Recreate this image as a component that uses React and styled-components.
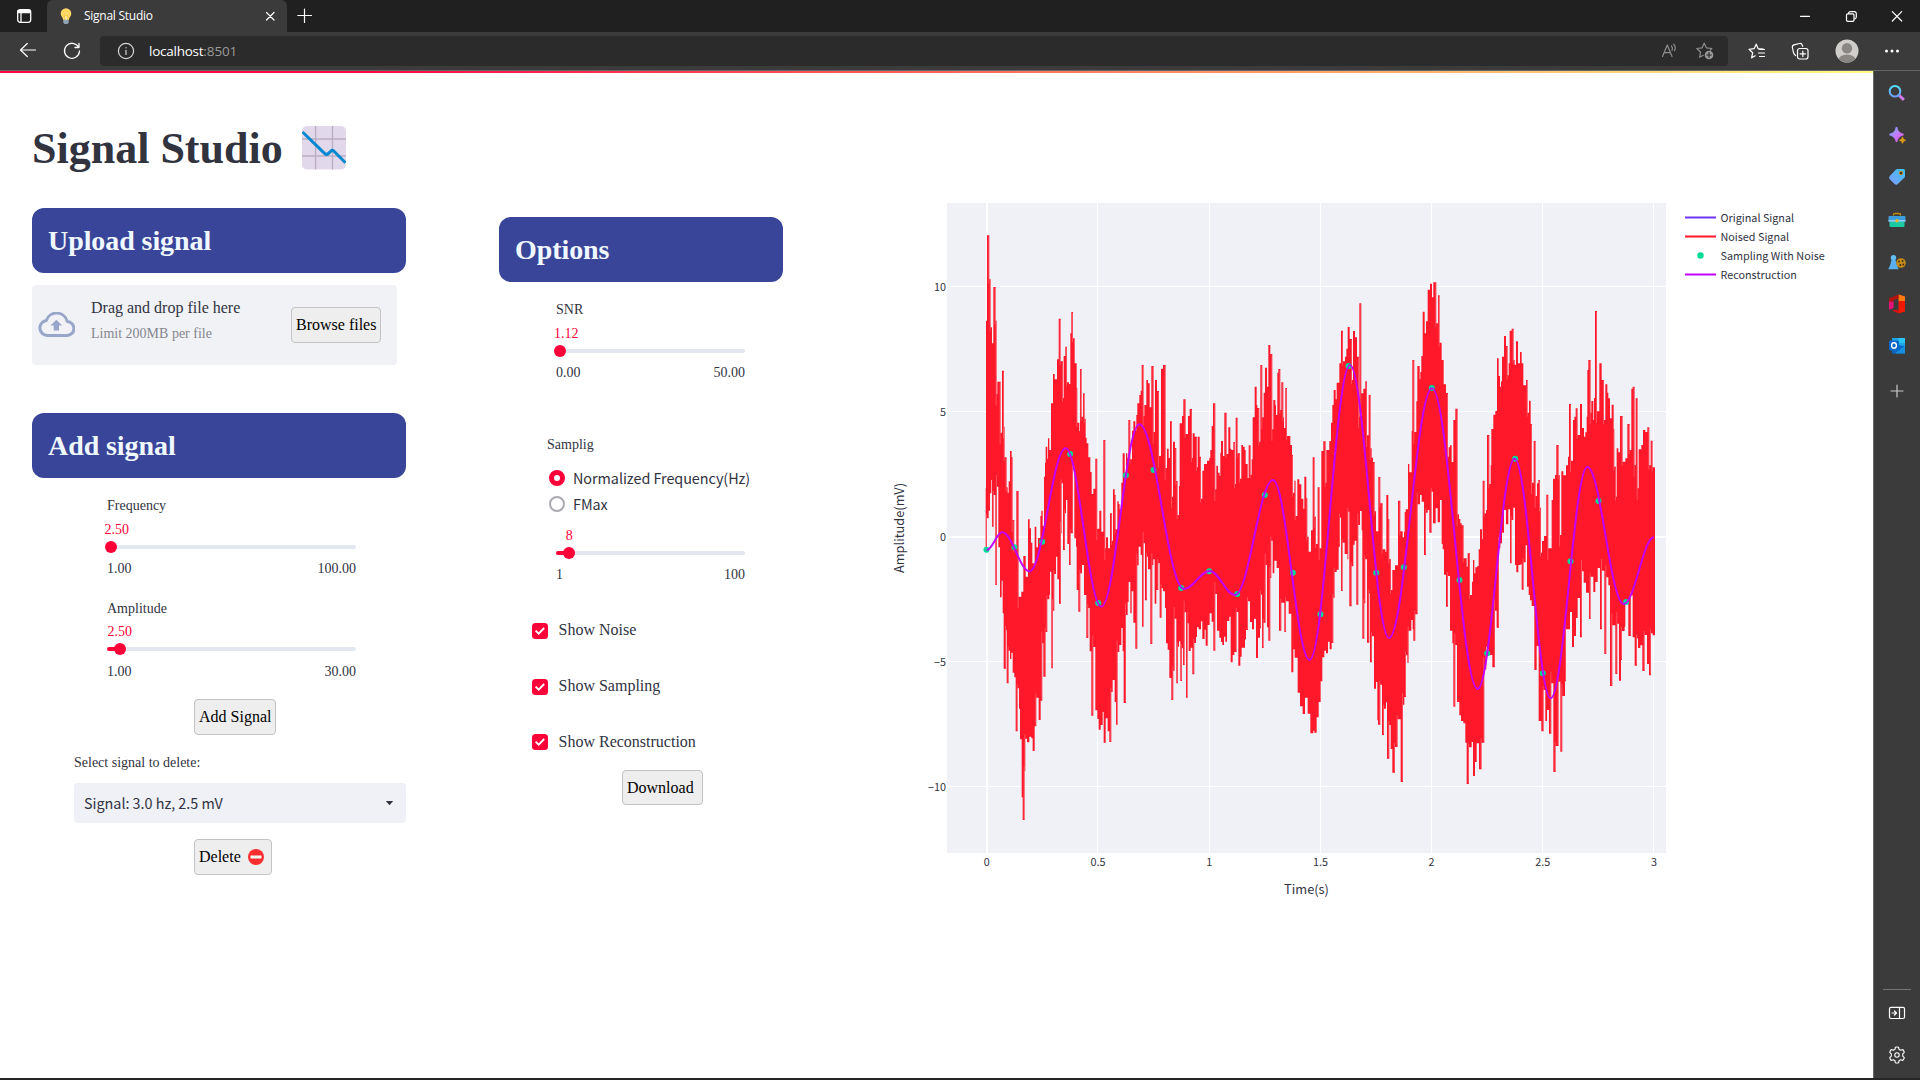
import React from "react";
import styled, { createGlobalStyle } from "styled-components";

const serif = `"Liberation Serif", "Times New Roman", serif`;
const sans = `"Noto Sans CJK SC", "Open Sans", sans-serif`;
const ui = `"Open Sans", "Noto Sans", sans-serif`;

const GlobalStyle = createGlobalStyle`
  * { box-sizing: border-box; }
  html, body { margin: 0; padding: 0; background: #222; overflow: hidden; }
  svg { display: block; flex: none; }
`;

/* ---------- browser frame ---------- */

const Window = styled.div`
  width: 1920px;
  height: 1080px;
  display: flex;
  flex-direction: column;
  background: #222;
  border-bottom: 2px solid #262626;
`;

const TabBar = styled.div`
  height: 32px;
  flex: none;
  display: flex;
  align-items: center;
  background: #202020;
`;

const TabActions = styled.div`
  width: 47px;
  display: flex;
  justify-content: center;
`;

const Tab = styled.div`
  width: 240px;
  height: 32px;
  display: flex;
  align-items: center;
  padding: 0 12px 0 13px;
  background: #3b3b3b;
  border-radius: 6px 6px 0 0;
`;

const TabTitle = styled.span`
  flex: 1;
  margin-left: 12px;
  color: #fff;
  font: 12px/16px ${ui};
  letter-spacing: -0.26px;
`;

const NewTab = styled.div`
  margin-left: 10px;
`;

const WindowButtons = styled.div`
  margin-left: auto;
  display: flex;
  gap: 28px;
  padding-right: 14px;
`;

const Toolbar = styled.div`
  height: 39px;
  flex: none;
  display: flex;
  align-items: center;
  padding: 0 20px 0 19px;
  background: #3b3b3b;
  border-bottom: 1px solid #666;
`;

const NavButtons = styled.div`
  width: 81px;
  display: flex;
  gap: 26px;
`;

const AddressBar = styled.div`
  width: 1628px;
  height: 30px;
  display: flex;
  align-items: center;
  padding: 0 14px 0 17px;
  background: #2b2b2b;
  border-radius: 4px;
`;

const Address = styled.span`
  flex: 1;
  margin-left: 14px;
  color: #fff;
  font: 13.5px/18px ${ui};
  letter-spacing: -0.25px;
  span { color: #9a9a9a; letter-spacing: -0.1px; }
`;

const AddressTools = styled.div`
  display: flex;
  gap: 18px;
`;

const ToolbarActions = styled.div`
  flex: 1;
  display: flex;
  align-items: center;
  justify-content: space-between;
  padding-left: 20px;
`;

const Body = styled.div`
  flex: 1;
  display: flex;
  min-height: 0;
`;

const Sidebar = styled.aside`
  width: 47px;
  display: flex;
  flex-direction: column;
  align-items: center;
  padding: 12px 0 14px;
  background: #3b3b3b;
  border-left: 1px solid #6a6a6a;
`;

const SidebarApps = styled.div`
  display: flex;
  flex-direction: column;
  gap: 22.2px;
`;

const SidebarFooter = styled.div`
  margin-top: auto;
  width: 28px;
  display: flex;
  flex-direction: column;
  align-items: center;
  gap: 24px;
  padding-top: 14px;
  border-top: 1px solid #767676;
`;

/* ---------- page ---------- */

const Page = styled.main`
  width: 1873px;
  background: #fff;
`;

const Decoration = styled.div`
  height: 2px;
  background: linear-gradient(90deg, #ff0844 20%, #fffd80);
`;

const Title = styled.h1`
  height: 53px;
  margin: 49px 0 0;
  padding-left: 32px;
  display: flex;
  gap: 19px;
  color: #31333f;
  font: bold 44px/53px ${serif};
`;

const Columns = styled.div`
  display: grid;
  grid-template-columns: 374px 284px 960px;
  padding-left: 32px;
`;

const Column = styled.section`
  display: flex;
  flex-direction: column;
  padding-top: ${(p) => p.$top}px;
  margin-left: ${(p) => p.$left || 0}px;
  width: ${(p) => p.$width}px;
`;

const Banner = styled.h2`
  height: 65px;
  margin: 0;
  padding-left: 16px;
  border-radius: 12px;
  background: #394598;
  color: #f0f8ff;
  font: bold 28px/65px ${serif};
  letter-spacing: -0.08px;
`;

const Dropzone = styled.div`
  width: 365px;
  height: 80px;
  margin: 12px 0 48px;
  display: flex;
  padding: 14px 16px 0 6px;
  border-radius: 4px;
  background: #f0f2f6;
`;

const DropText = styled.div`
  flex: 1;
  margin-left: 16px;
  color: #31333f;
  font: 16px/18px ${serif};
`;

const DropHint = styled.div`
  margin-top: 8px;
  color: #85868d;
  font-size: 14px;
`;

const CloudSlot = styled.div`
  padding-top: 13px;
`;

const Button = styled.button`
  width: ${(p) => p.$width}px;
  height: ${(p) => p.$height || 36}px;
  margin: ${(p) => p.$margin || "0"};
  padding: 0 4px;
  display: flex;
  align-items: center;
  gap: 7px;
  border: 1px solid #c3c3c5;
  border-radius: 4px;
  background: #eee;
  color: #000;
  font: 16px/34px ${serif};
  white-space: nowrap;
`;

const SliderBox = styled.div`
  width: ${(p) => p.$width}px;
  margin: ${(p) => p.$margin};
  color: #31333f;
  font: 14px/20px ${serif};
`;

const SliderLabel = styled.div`
  height: 20px;
  margin-bottom: ${(p) => p.$gap}px;
`;

const SliderValue = styled.div`
  width: max-content;
  min-width: 14px;
  height: 20px;
  text-align: center;
  color: #ff0038;
`;

const Track = styled.div`
  position: relative;
  height: 4px;
  margin: 5px 0 ${(p) => p.$gap}px;
  border-radius: 2px;
  background: #e3e7f0;
`;

const Fill = styled.div`
  height: 4px;
  border-radius: 2px;
  background: #ff0038;
`;

const Thumb = styled.div`
  position: absolute;
  top: -4px;
  width: 12px;
  height: 12px;
  border-radius: 50%;
  background: #ff0038;
`;

const Ticks = styled.div`
  height: 20px;
  display: flex;
  justify-content: space-between;
`;

const FieldLabel = styled.div`
  margin: ${(p) => p.$margin};
  color: #31333f;
  font: 14px/20px ${serif};
`;

const Select = styled.div`
  width: 332px;
  height: 40px;
  margin-left: 42px;
  display: flex;
  align-items: center;
  justify-content: space-between;
  padding: 0 13px 0 10px;
  border-radius: 4px;
  background: #eff1f7;
  color: #31333f;
  font: 14.4px/24px ${sans};
  letter-spacing: -0.03px;
`;

const RadioRow = styled.div`
  height: ${(p) => p.$height || 26}px;
  margin-left: 50px;
  display: flex;
  align-items: center;
  gap: 8px;
  color: #31333f;
  font: 14.4px/24px ${sans};
  letter-spacing: -0.05px;
`;

const RadioDot = styled.span`
  width: 16px;
  height: 16px;
  border-radius: 50%;
  border: ${(p) => (p.$on ? "5px solid #ff0038" : "2px solid #a9aab0")};
  background: #fff;
`;

const CheckRow = styled.div`
  height: 16px;
  margin: 0 0 ${(p) => p.$gap}px 33px;
  display: flex;
  align-items: center;
  gap: 10.5px;
  color: #31333f;
  font: 16px/16px ${serif};
`;

const CheckText = styled.span`
  margin-top: ${(p) => p.$shift}px;
`;

const ChartSlot = styled.section`
  padding-top: 15px;
  margin-left: 190px;
`;

const ChartSvg = styled.svg`
  text { fill: #31333f; font-family: ${sans}; font-size: 10.8px; }
  .axis { font-size: 12.8px; }
`;

function Slider({ width, margin, label, labelGap = 5, tickGap = 10, value, valueLeft, pos, min, max }) {
  return (
    <SliderBox $width={width} $margin={margin}>
      {label && <SliderLabel $gap={labelGap}>{label}</SliderLabel>}
      <SliderValue style={{ marginLeft: valueLeft }}>{value}</SliderValue>
      <Track $gap={tickGap}>
        <Fill style={{ width: pos }} />
        <Thumb style={{ left: pos - 6 }} />
      </Track>
      <Ticks><span>{min}</span><span>{max}</span></Ticks>
    </SliderBox>
  );
}

function Check({ label, gap, shift = -2 }) {
  return (
    <CheckRow $gap={gap}>
      <svg width="16" height="16" viewBox="0 0 16 16">
        <rect width="16" height="16" rx="3.5" fill="#ff0038" />
        <path d="M3.6 7.6 6.7 10.6 12.2 5" fill="none" stroke="#fff" strokeWidth="1.9" />
      </svg>
      <CheckText $shift={shift}>{label}</CheckText>
    </CheckRow>
  );
}

/* ---------- chart ---------- */

/* Upper and lower outline of the noisy trace: x, y pairs at a third of a pixel. */
const UPPER = `317,895 318,392 321,136 328,268 332,412 336,460 340,291 347,392 350,612 352,575 362,728 366,542 372,710 374,802 380,892 383,908 386,874 390,783 395,802 398,990 403,1075 409,903 416,1220 424,1205 430,1098 437,1160 444,988 449,1015 453,1058 457,1120 464,1010 469,1072 474,1044 481,978 484,962 488,1008 492,860 495,818 497,770 502,806 504,745 508,780 513,640 519,552 524,568 531,508 536,386 542,514 549,624 551,498 556,470 561,577 567,582 571,430 574,366 579,445 584,520 590,594 592,698 598,724 600,537 605,680 609,610 614,686 617,743 620,760 625,802 631,846 635,912 640,896 646,806 652,1016 658,962 664,1025 670,750 676,1075 678,1042 684,1075 690,970 696,1052 699,898 704,915 707,1018 712,934 716,942 719,958 724,878 728,790 734,848 738,790 742,805 745,690 751,808 756,722 760,694 766,722 769,675 772,640 778,615 782,602 785,525 791,678 793,645 799,570 804,580 809,652 814,528 821,726 825,570 831,603 837,798 843,536 849,525 857,834 861,776 866,804 870,694 876,920 879,755 885,774 889,873 893,975 897,888 899,700 906,678 910,628 917,732 924,678 929,657 936,804 938,730 944,740 951,832 953,740 959,800 963,926 967,842 972,822 981,812 988,803 991,780 995,708 999,640 1006,898 1009,827 1014,848 1019,858 1021,788 1023,753 1029,798 1033,668 1040,792 1045,712 1051,776 1054,780 1060,756 1065,882 1067,683 1073,790 1080,866 1084,765 1089,770 1094,780 1097,822 1103,864 1106,766 1112,854 1115,808 1118,682 1124,590 1130,645 1132,654 1138,755 1141,525 1147,682 1151,608 1155,533 1161,590 1165,465 1171,492 1177,718 1180,630 1186,646 1188,675 1192,548 1195,537 1201,660 1204,577 1210,682 1212,714 1216,594 1221,738 1231,765 1236,795 1239,908 1243,872 1247,978 1252,868 1258,883 1264,926 1270,956 1273,860 1279,925 1282,1040 1286,1085 1293,1021 1298,802 1304,980 1308,1062 1313,892 1319,1075 1324,783 1330,754 1337,878 1339,780 1348,753 1353,698 1357,645 1361,600 1367,628 1370,578 1378,520 1383,422 1389,514 1395,500 1399,476 1403,411 1409,447 1416,570 1419,423 1425,442 1431,500 1437,680 1438,340 1444,610 1450,596 1456,574 1461,736 1466,615 1472,775 1475,803 1479,816 1484,964 1488,1024 1495,861 1501,940 1508,1078 1516,1085 1519,915 1525,988 1528,1108 1533,1200 1537,1140 1545,1126 1554,932 1561,1024 1568,1042 1572,1025 1574,966 1577,958 1584,822 1588,847 1595,722 1597,510 1603,726 1609,634 1612,528 1619,568 1621,546 1624,498 1628,365 1634,430 1638,394 1643,299 1650,281 1656,322 1660,277 1669,400 1674,316 1679,458 1685,510 1691,583 1698,609 1704,800 1706,772 1710,766 1715,816 1720,690 1726,656 1733,973 1737,987 1741,1000 1745,1006 1751,1105 1760,1130 1763,1090 1770,1215 1776,1175 1779,1110 1783,1150 1786,1132 1792,1128 1796,1078 1800,1018 1806,1048 1808,872 1814,970 1818,960 1821,735 1828,882 1832,826 1834,717 1840,674 1846,663 1851,505 1856,558 1860,590 1863,574 1866,500 1872,438 1878,468 1883,556 1886,520 1889,422 1895,416 1901,510 1904,524 1908,454 1914,520 1920,486 1925,520 1930,586 1938,570 1943,668 1947,632 1952,702 1956,878 1961,753 1967,918 1971,880 1975,870 1980,953 1983,1088 1986,1053 1992,1038 1999,914 2005,1075 2015,930 2019,866 2025,855 2029,765 2036,856 2040,1035 2044,844 2050,856 2058,826 2064,800 2067,642 2073,812 2079,690 2083,680 2087,655 2093,735 2100,642 2106,714 2112,740 2116,727 2120,680 2122,540 2125,510 2132,668 2134,633 2140,690 2142,624 2145,363 2151,664 2158,520 2165,570 2172,690 2176,583 2182,608 2185,625 2190,685 2195,644 2201,718 2203,830 2208,920 2210,775 2215,787 2220,678 2228,815 2236,805 2242,702 2249,780 2254,596 2258,590 2264,825 2267,625 2273,895 2276,778 2284,765 2289,720 2296,726 2302,712 2308,826 2312,752 2318,832 2325,832`;

const LOWER = `317,1075 321,985 326,962 330,910 334,870 336,1010 341,915 346,1185 351,890 355,1072 360,1222 365,1172 368,1270 371,1436 378,1320 380,1480 386,1382 390,1407 394,1388 398,1448 403,1462 407,1624 413,1495 417,1556 420,1648 425,1822 428,1890 434,1742 436,1646 441,1657 448,1640 454,1645 458,1683 464,1609 469,1523 476,1590 482,1532 487,1360 490,1460 497,1326 502,1228 508,1214 510,1145 514,1435 519,1262 523,1152 528,1100 532,1168 537,1241 543,1030 545,880 549,1080 555,970 558,930 562,1062 567,1125 572,1030 579,840 583,1045 588,1070 590,1200 595,1265 601,1150 606,1125 612,1215 619,1344 625,1254 629,1384 634,1577 640,1371 646,1561 652,1587 656,1619 662,1605 668,1566 671,1658 677,1585 683,1624 688,1656 694,1506 698,1470 704,1536 708,1604 713,1386 718,1365 724,1314 728,1384 731,1539 738,1275 743,1236 746,1176 751,1270 755,1204 760,1298 766,1376 772,1126 776,1070 782,1095 786,1310 791,1060 795,1231 801,1100 804,1138 811,1362 817,1125 820,1108 824,1241 829,1200 835,1120 839,1283 845,1195 849,1204 855,1254 858,1360 863,1379 868,1464 874,1530 880,1442 884,1286 889,1480 894,1370 897,1354 901,1473 906,1375 909,1425 914,1267 918,1523 923,1300 926,1383 932,1373 937,1453 943,1359 948,1341 951,1312 956,1318 963,1294 967,1347 974,1319 977,1367 983,1305 989,1270 995,1295 1000,1382 1006,1212 1011,1322 1018,1343 1023,1356 1027,1365 1032,1340 1036,1355 1041,1293 1048,1280 1052,1417 1058,1395 1063,1386 1070,1266 1075,1427 1081,1400 1085,1373 1095,1348 1098,1320 1104,1234 1110,1296 1116,1318 1122,1286 1128,1404 1134,1343 1140,1315 1143,1214 1146,1374 1151,1298 1157,1125 1161,1312 1165,1352 1171,1164 1174,1052 1178,1150 1183,1112 1190,1134 1197,1322 1204,1238 1213,1326 1218,1234 1226,1271 1234,1447 1240,1378 1244,1403 1253,1508 1260,1549 1268,1572 1275,1523 1283,1571 1291,1630 1300,1622 1303,1628 1310,1582 1316,1536 1322,1474 1327,1402 1333,1382 1338,1390 1344,1355 1349,1378 1355,1359 1360,1223 1364,1146 1370,1139 1376,1070 1380,983 1383,1203 1388,1058 1394,1092 1402,1108 1405,965 1408,1249 1415,1129 1420,1064 1424,1052 1429,1244 1435,1005 1440,963 1445,1021 1447,1346 1453,1240 1456,1108 1461,1358 1468,1210 1470,1417 1476,1339 1482,1496 1488,1476 1492,1591 1494,1604 1501,1484 1506,1635 1512,1556 1518,1537 1521,1706 1528,1605 1532,1677 1537,1748 1545,1671 1553,1588 1562,1776 1569,1544 1573,1521 1578,1396 1582,1418 1586,1322 1594,1290 1598,1318 1600,1352 1606,1273 1613,943 1620,915 1625,935 1632,1095 1638,968 1643,960 1648,1028 1655,905 1659,1000 1667,955 1673,997 1680,930 1685,1062 1688,1078 1692,1154 1698,1250 1704,1158 1710,1322 1717,1360 1720,1550 1726,1365 1731,1536 1738,1576 1743,1593 1750,1600 1756,1658 1760,1782 1767,1672 1775,1656 1779,1758 1785,1716 1790,1660 1797,1738 1805,1658 1813,1438 1819,1370 1825,1396 1831,1395 1837,1432 1845,1262 1850,1313 1857,1075 1861,1060 1866,1028 1872,960 1878,1003 1885,958 1890,1120 1895,990 1900,953 1905,1125 1909,1147 1915,1125 1922,1123 1925,1199 1931,1117 1937,1066 1941,1190 1946,1215 1950,1231 1955,1248 1963,1440 1970,1368 1976,1593 1984,1624 1991,1500 1996,1593 2001,1560 2007,1631 2014,1480 2020,1746 2027,1668 2036,1475 2041,1685 2047,1518 2055,1474 2058,1318 2070,1266 2076,1371 2082,1338 2088,1284 2093,1224 2100,1342 2106,1144 2111,1178 2118,1208 2127,1287 2132,1160 2140,1206 2146,1176 2153,1134 2160,1318 2166,1142 2173,1392 2179,1162 2185,1186 2190,1488 2197,1306 2206,1452 2212,1301 2217,1472 2223,1410 2226,1323 2234,1310 2236,1236 2245,1338 2253,1216 2258,1342 2264,1427 2271,1345 2274,1374 2281,1366 2287,1443 2294,1335 2301,1422 2307,1456 2313,1330 2318,1336 2325,1336`;

const parse = (s) => s.split(" ").map((p) => p.split(",").map(Number));
const upper = parse(UPPER);
const lower = parse(LOWER);

const steps = (pts) => {
  const out = [];
  pts.forEach(([x, y], i) => {
    if (i) out.push([x, pts[i - 1][1]]);
    out.push([x, y]);
  });
  return out;
};

const noisePath = "M" + [...steps(upper), ...steps(lower).reverse()].map((p) => p.join(" ")).join("L") + "Z";

/* Pale seams where neighbouring samples of the trace leave a hairline. */
const seams = (pts, dir) =>
  pts
    .map(([x, y], i) => {
      const next = pts[i + 1];
      if (!next) return "";
      const drop = (next[1] - y) * dir;
      return drop > 75 ? `M${next[0] - 1.5} ${y + 3 * dir}V${next[1] + dir * (drop > 150 ? 35 : 12)}` : "";
    })
    .join("");
const seamPath = seams(upper, 1) + seams(lower, -1);

const EXTREMA = [[320, 1080], [367, 1027], [449, 1144], [557, 775], [664, 1250], [778, 703], [912, 1197], [989, 1143], [1065, 1215], [1179, 870], [1289, 1410], [1410, 525], [1527, 1344], [1656, 595], [1793, 1497], [1904, 806], [2012, 1525], [2122, 831], [2231, 1242], [2322, 1042]];
const wavePath = EXTREMA.map(([x, y], i) => {
  if (!i) return `M${x} ${y}`;
  const [px, py] = EXTREMA[i - 1];
  const d = (x - px) * 0.3642;
  return `C${px + d} ${py} ${x - d} ${y} ${x} ${y}`;
}).join("");

const SAMPLES = [[319, 1079], [403, 1072], [486, 1055], [570, 792], [654, 1239], [737, 856], [820, 840], [903, 1194], [987, 1144], [1071, 1212], [1154, 915], [1238, 1148], [1321, 1273], [1405, 528], [1488, 1148], [1571, 1132], [1655, 594], [1738, 1170], [1821, 1390], [1905, 806], [1988, 1450], [2071, 1114], [2155, 933], [2238, 1236]];

const X_TICKS = [[106.8, "0"], [218, "0.5"], [329.3, "1"], [440.5, "1.5"], [551.5, "2"], [662.7, "2.5"], [774, "3"]];
const X_GRID = [217.5, 329.5, 440.5, 551.5, 662.5, 773.5];
const Y_TICKS = [[96.5, "10"], [221.5, "5"], [346.5, "0"], [471.5, "−5"], [596.5, "−10"]];
const LEGEND = [["Original Signal", "#6f35f0"], ["Noised Signal", "#ff172a"], ["Sampling With Noise", null], ["Reconstruction", "#c400fa"]];

function Chart() {
  return (
    <ChartSvg width="960" height="720" viewBox="0 0 960 720">
      <rect x="67" y="13" width="719" height="650" fill="#eff1f7" />
      {X_GRID.map((x) => <rect key={x} x={x - 0.5} y="13" width="1" height="650" fill="#fff" />)}
      {Y_TICKS.map(([y, t]) => <rect key={t} x="67" y={t === "0" ? y - 0.5 : y - 0.5} width="719" height={t === "0" ? 2 : 1} fill="#fff" />)}
      <rect x="106" y="13" width="2" height="650" fill="#fff" />
      <g transform="scale(0.33333)">
        <path d={noisePath} fill="#ff172a" />
        <path d={seamPath} fill="none" stroke="#fff" strokeOpacity="0.32" strokeWidth="2.2" />
        {SAMPLES.map(([x, y]) => <circle key={x} cx={x + 0.5} cy={y} r="9" fill="#00dc98" />)}
        <path d={wavePath} fill="none" stroke="#c400fa" strokeWidth="6" />
      </g>
      {X_TICKS.map(([x, t]) => <text key={t} x={x} y="675.6" textAnchor="middle">{t}</text>)}
      {Y_TICKS.map(([y, t]) => <text key={t} x="66" y={y + 4.3} textAnchor="end">{t}</text>)}
      <text className="axis" x="426.5" y="704" textAnchor="middle">Time(s)</text>
      <text className="axis" transform="translate(23.5 338) rotate(-90)" textAnchor="middle">Amplitude(mV)</text>
      {LEGEND.map(([t, c], i) => (
        <g key={t}>
          {c ? <rect x="805" y={26.5 + i * 19} width="31" height="2" fill={c} /> : <circle cx="820.5" cy={27.5 + i * 19} r="3.2" fill="#00dc98" />}
          <text x="840.5" y={32 + i * 19}>{t}</text>
        </g>
      ))}
    </ChartSvg>
  );
}

/* ---------- icons ---------- */

const Line = ({ w = 16, h = w, vb = `0 0 ${w} ${h}`, c = "#fff", sw = 1.2, children }) => (
  <svg width={w} height={h} viewBox={vb} fill="none" stroke={c} strokeWidth={sw} strokeLinecap="round" strokeLinejoin="round">{children}</svg>
);

const STAR = "M8.2 1.2 10.2 5.7 15.2 6.2M8.2 1.2 6.1 5.7 1 6.3 4.7 9.7 3.6 14.8 7.2 12.8";

const Bulb = () => (
  <svg width="12" height="17" viewBox="0 0 12 17">
    <path d="M6 .3A5.3 5.3 0 0 0 .7 5.6C.7 8.6 3 9.3 3.2 12h5.6C9 9.3 11.3 8.6 11.3 5.6A5.3 5.3 0 0 0 6 .3z" fill="#fdd663" />
    <path d="M5 12 4.2 7.5l1.3.8.7-.8.7.8 1-.8L7 12" fill="#fff0a8" stroke="#f2b632" strokeWidth=".6" />
    <path d="M3.3 11.7h5.4v2.5L7.6 16H4.4l-1.1-1.8z" fill="#8fa5b5" />
  </svg>
);

const EmojiSvg = styled.svg`
  margin-top: 4px;
`;

const ChartEmoji = () => (
  <EmojiSvg width="44" height="44" viewBox="0 0 44 44">
    <rect width="44" height="43.5" rx="5" fill="#e1d8ec" />
    <path d="M13.6 0v43.5M30.5 0v43.5M0 13h44M0 30h44" stroke="#b9adc1" strokeWidth="1.3" />
    <path d="M.5 6 22.5 27.4Q24.5 29.4 26.5 27.4L29 25Q30.5 23.7 32 25.2L43.5 36.8" fill="none" stroke="#0288d1" strokeWidth="3" />
  </EmojiSvg>
);

const Cloud = () => (
  <svg width="37" height="25" viewBox="0 0 37 25">
    <path d="M9.3 23.5a7.6 7.6 0 0 1-1-15.1A10.9 10.9 0 0 1 29.2 9.5 7 7 0 0 1 28.6 23.5z" fill="none" stroke="#98a6c9" strokeWidth="3" strokeLinejoin="round" />
    <path d="M18.3 7.8 24.2 13.6H21V18.6H15.7V13.6H12.5z" fill="#98a6c9" />
  </svg>
);

const sidebarIcons = [
  <svg key="search" width="20" height="20" viewBox="0 0 20 20">
    <defs><linearGradient id="s1" x1="0" y1="0" x2="0" y2="1"><stop stopColor="#50e2fa" /><stop offset="1" stopColor="#6f9cff" /></linearGradient></defs>
    <path d="m12.3 12.5 4.6 4.4" stroke="#d279ea" strokeWidth="3" />
    <circle cx="8" cy="8.3" r="5.3" fill="none" stroke="url(#s1)" strokeWidth="2" />
  </svg>,
  <svg key="discover" width="20" height="20" viewBox="0 0 20 20">
    <defs><linearGradient id="s2" x1="0" y1="0" x2="1" y2="1"><stop stopColor="#50b8f5" /><stop offset=".5" stopColor="#c57bff" /><stop offset="1" stopColor="#e34fd8" /></linearGradient></defs>
    <path d="M9.5 2Q10.5 8.2 16.5 9.5 10.5 10.8 9.500 17 8.500 10.800 2.500 9.500 8.500 8.200 9.500 2z" fill="url(#s2)" stroke="url(#s2)" strokeWidth="1.5" />
    <path d="M15.5 11.8Q16 14.500 18.800 15.200 16 15.900 15.500 18.600 15 15.900 12.200 15.200 15 14.500 15.500 11.800z" fill="#d99a16" stroke="#d99a16" strokeWidth=".5" />
  </svg>,
  <svg key="shopping" width="20" height="20" viewBox="0 0 20 20">
    <defs><linearGradient id="s3" x1="1" y1="0" x2="0" y2="1"><stop stopColor="#35c5ef" /><stop offset="1" stopColor="#849aff" /></linearGradient></defs>
    <path d="M9 2.5Q9.6 2 10.5 2H16.5Q18 2 18 3.5V9Q18 10 17.3 10.7L10.5 17.300Q9 18.500 7.500 17L2.500 12Q1.500 10.500 2.800 9z" fill="url(#s3)" />
    <circle cx="14" cy="6" r="1.7" fill="#3b3525" stroke="#c78316" strokeWidth="1" />
  </svg>,
  <svg key="tools" width="20" height="20" viewBox="0 0 20 20">
    <path d="M6.5 5.500V5q0-1.500 1.500-1.500h4q1.500 0 1.500 1.500v.5" fill="none" stroke="#c18812" strokeWidth="1.500" />
    <rect x="2.500" y="9.500" width="15" height="7.500" rx="1" fill="#19cba5" />
    <path d="M1.500 11.500V7q0-1 1-1h15q1 0 1 1v4.500z" fill="#3c9edc" /><path d="M1.500 10.200h17v1.300h-17z" fill="#b0d3fa" />
    <circle cx="10" cy="10.700" r="1.700" fill="#f0b429" />
  </svg>,
  <svg key="games" width="20" height="20" viewBox="0 0 20 20">
    <circle cx="6.500" cy="5.800" r="2.700" fill="#63bdf5" /><path d="M4.500 7.800h4L10 13.300l1.700 4H1.200l1.900-4z" fill="#59aff0" />
    <circle cx="14" cy="11" r="4.800" fill="#c48a1b" /><g fill="#3d2d12"><circle cx="12" cy="9.500" r=".9" /><circle cx="15.600" cy="9" r=".9" /><circle cx="13.300" cy="13" r=".9" /><circle cx="16.300" cy="12.500" r=".9" /></g>
  </svg>,
  <svg key="office" width="20" height="20" viewBox="0 0 20 20">
    <path d="M11.500.5 18 2.500V17.500L11.500 19.500z" fill="#f01800" /><path d="M11.500.5 18 2.500V7h-6.500z" fill="#f87b12" />
    <path d="M11.500.5V4.500L6.500 6v8L2 15.800V4.200z" fill="#b51414" /><path d="M2 8 6.500 7.500V14L2 15.800z" fill="#e3137c" /><path d="M5 16.500 11.500 15.500V19.500z" fill="#d81212" />
  </svg>,
  <svg key="outlook" width="20" height="20" viewBox="0 0 20 20">
    <path d="M5 2.500q0-.5.5-.5H17.500q.5 0 .5.500V10H5z" fill="#1ea6e8" /><path d="M11.500 2H18v5h-6.500z" fill="#28c4f4" /><path d="M5 9 18 10V17.500H5z" fill="#0a67c0" /><path d="M18 9.500V17.500H8z" fill="#168fe0" />
    <rect x="2" y="4.500" width="10" height="10" rx="1" fill="#0768ca" /><ellipse cx="7" cy="9.500" rx="2.400" ry="2.700" fill="none" stroke="#fff" strokeWidth="1.400" />
  </svg>,
];

function BrowserTop() {
  return (
    <>
      <TabBar>
        <TabActions>
          <Line w={16} sw={1.3}><rect x="1.7" y="1.7" width="13" height="12.6" rx="2.5" /><path d="M2 2.500h12.400v2.200H2z" fill="#fff" /><path d="M5 5v9" /></Line>
        </TabActions>
        <Tab>
          <Bulb />
          <TabTitle>Signal Studio</TabTitle>
          <Line w={10} sw={1.2}><path d="m1.500 1.500 7.500 7.500M9 1.500 1.500 9" /></Line>
        </Tab>
        <NewTab><Line w={16} sw={1.2}><path d="M7.500 1v13.500M.8 7.500h13.700" /></Line></NewTab>
        <WindowButtons>
          <Line w={18}><path d="M4.500 9.300h9" /></Line>
          <Line w={18}><rect x="4.500" y="6.800" width="7.500" height="7.500" rx="1.300" /><path d="M6.500 6.300V6Q7 4.600 8.500 4.600H12.500Q14.300 4.800 14.300 6.600V10Q14.200 11.500 12.800 12" /></Line>
          <Line w={18}><path d="m4.300 4.600 9.400 9.400M13.700 4.600l-9.400 9.400" /></Line>
        </WindowButtons>
      </TabBar>
      <Toolbar>
        <NavButtons>
          <Line w={18} h={16}><path d="M16.500 8H1.500M8.300 1.500 1.500 8l6.800 6.500" /></Line>
          <Line w={18} h={18} sw={1.3}><path d="M15.500 5A7.500 7.500 0 1 0 16.500 9M16 1.500V5.500H12" /></Line>
        </NavButtons>
        <AddressBar>
          <Line w={18} sw={1.2} c="#d5d5d5"><circle cx="9" cy="9" r="7.600" /><path d="M9 8.300v4.200M9 5.600v.2" /></Line>
          <Address>localhost<span>:8501</span></Address>
          <AddressTools>
            <Line w={18} c="#8d8d8d"><path d="M2.500 14.500 7.300 3l4.700 11.500M4.200 10.700h6.200M11.500 4q1.700 2 .5 4.300M13.700 2.200q2.700 3.300.7 6.600" /></Line>
            <Line w={18} c="#8d8d8d"><path d="M8.200 1.200 10.500 5.900 15.800 6.500M8.200 1.200 6 5.900.8 6.500 4.600 10.200 3.600 15.300 7.300 13.300M15.800 6.500 14.300 8" /><circle cx="13" cy="13" r="4.300" fill="#9a9a9a" stroke="none" /><path d="M13 10.700v4.600M10.700 13h4.600" stroke="#2b2b2b" /></Line>
          </AddressTools>
        </AddressBar>
        <ToolbarActions>
          <Line w={18} h={16}><path d={STAR + "M11 6.500h5.500M10.500 10h6M11.500 13.500h5"} /></Line>
          <Line w={18} h={18}><rect x="6.500" y="6.500" width="10.500" height="10.500" rx="2.200" /><path d="M11.800 9v5.500M9 11.800h5.500M4.500 13.500Q2.800 12 2.300 10L1.400 5.500Q1 3.500 3 2.900L8.500 1.500Q10.500 1 11.200 3L11.700 4.300" /></Line>
          <svg width="24" height="24" viewBox="0 0 24 24">
            <defs><clipPath id="face"><circle cx="12" cy="12" r="11.500" /></clipPath></defs>
            <g clipPath="url(#face)"><rect width="24" height="24" fill="#d0ceca" /><circle cx="12" cy="9.300" r="5.200" fill="#8a8683" /><ellipse cx="12" cy="21" rx="8.500" ry="5.500" fill="#8a8683" /></g>
          </svg>
          <svg width="16" height="4" viewBox="0 0 16 4" fill="#fff"><circle cx="2.500" cy="2" r="1.500" /><circle cx="8" cy="2" r="1.500" /><circle cx="13.500" cy="2" r="1.500" /></svg>
        </ToolbarActions>
      </Toolbar>
    </>
  );
}

export default function App() {
  return (
    <Window>
      <GlobalStyle />
      <BrowserTop />
      <Body>
        <Page>
          <Decoration />
          <Title>Signal Studio <ChartEmoji /></Title>
          <Columns>
            <Column $top={33} $width={374}>
              <Banner>Upload signal</Banner>
              <Dropzone>
                <CloudSlot><Cloud /></CloudSlot>
                <DropText>Drag and drop file here<DropHint>Limit 200MB per file</DropHint></DropText>
                <Button $width={90} $margin="8px 0 0">Browse files</Button>
              </Dropzone>
              <Banner>Add signal</Banner>
              <Slider width={249} margin="18px 0 0 75px" label="Frequency" labelGap={4} value="2.50" valueLeft={-2.5} pos={3.7} min="1.00" max="100.00" />
              <Slider width={249} margin="20px 0 0 75px" label="Amplitude" labelGap={3} tickGap={11} value="2.50" valueLeft={0.5} pos={13} min="1.00" max="30.00" />
              <Button $width={82} $margin="17px 0 0 162px">Add Signal</Button>
              <FieldLabel $margin="18px 0 10px 42px">Select signal to delete:</FieldLabel>
              <Select>
                Signal: 3.0 hz, 2.5 mV
                <svg width="7" height="4" viewBox="0 0 7 4"><path d="M.2.5Q0 0 .6 0H6.4Q7 0 6.8.5L3.9 3.7Q3.5 4.1 3.1 3.7z" fill="#31333f" /></svg>
              </Select>
              <Button $width={78} $margin="16px 0 0 162px">
                Delete
                <svg width="16" height="16" viewBox="0 0 16 16"><circle cx="8" cy="8" r="8" fill="#fb2f2f" /><rect x="2.5" y="6.6" width="11" height="2.8" rx=".5" fill="#fff" /></svg>
              </Button>
            </Column>
            <Column $top={42} $left={93} $width={284}>
              <Banner>Options</Banner>
              <Slider width={189} margin="18px 0 0 57px" label="SNR" labelGap={4} tickGap={10} value="1.12" valueLeft={-2} pos={4} min="0.00" max="50.00" />
              <FieldLabel $margin="52px 0 10px 48px">Samplig</FieldLabel>
              <RadioRow><RadioDot $on />Normalized Frequency(Hz)</RadioRow>
              <RadioRow $height={25}><RadioDot />FMax</RadioRow>
              <Slider width={189} margin="10px 0 38px 57px" tickGap={10} value="8" valueLeft={6.3} pos={13.3} min="1" max="100" />
              <Check label="Show Noise" gap={40} />
              <Check label="Show Sampling" gap={39} />
              <Check label="Show Reconstruction" gap={20} shift={0} />
              <Button $width={81} $height={35} $margin="0 0 0 123px">Download</Button>
            </Column>
            <ChartSlot><Chart /></ChartSlot>
          </Columns>
        </Page>
        <Sidebar>
          <SidebarApps>
            {sidebarIcons}
            <Line w={20} h={20} c="#c9c9c9" sw={1.2}><path d="M10 7v12M4 13h12" /></Line>
          </SidebarApps>
          <SidebarFooter>
            <Line w={18} h={18}><rect x="1.5" y="3.3" width="15" height="11.2" rx="1.5" /><path d="M11.5 3.5v11M4.2 9h4M6.5 7l2 2-2 2" /></Line>
            <Line w={18} h={18} sw={1.1}><circle cx="9" cy="9" r="2.2" /><path d="M7.4 1.2Q9 .7 10.6 1.2L11 3.3 12.6 4.2 14.7 3.5Q15.9 4.7 16.3 6.3L14.7 7.8V10.2L16.3 11.7Q15.9 13.3 14.7 14.5L12.6 13.8 11 14.7 10.6 16.8Q9 17.3 7.4 16.8L7 14.7 5.4 13.8 3.3 14.5Q2.1 13.3 1.7 11.7L3.3 10.2V7.8L1.7 6.3Q2.1 4.7 3.3 3.5L5.400 4.200 7 3.300z" /></Line>
          </SidebarFooter>
        </Sidebar>
      </Body>
    </Window>
  );
}
